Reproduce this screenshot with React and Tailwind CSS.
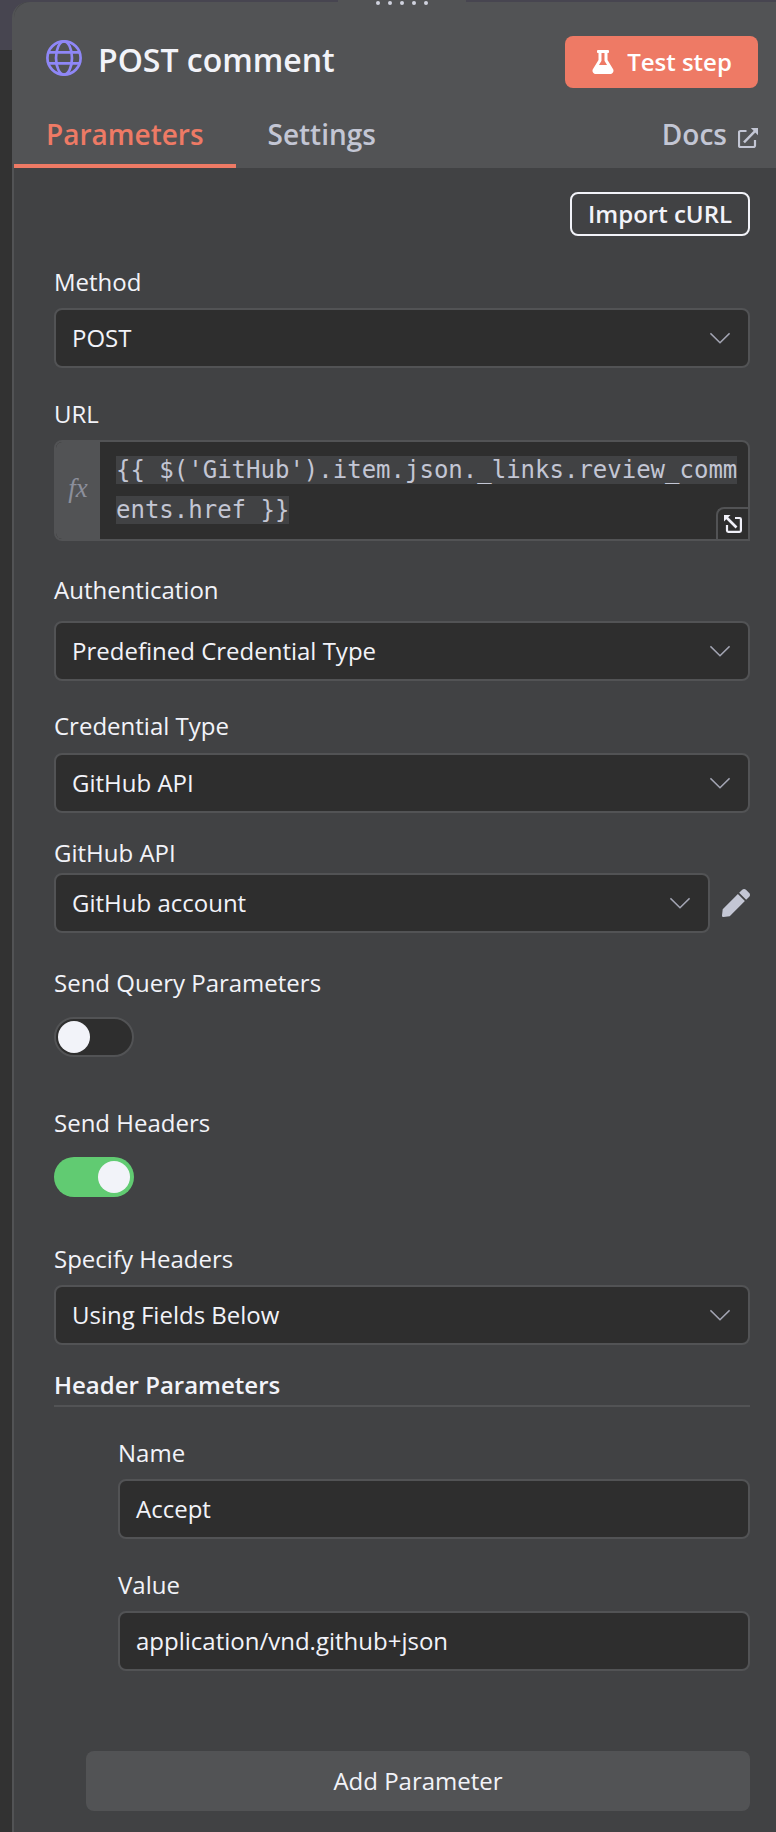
import React from "react";
import { FaFlask, FaPen } from "react-icons/fa";

function GlobeIcon() {
  return (
    <svg className="block size-9 shrink-0" viewBox="0 0 36 36" fill="none" stroke="#8f87f7" strokeWidth="2.7">
      <circle cx="18" cy="18" r="16.6" />
      <ellipse cx="18" cy="18" rx="8" ry="16.6" />
      <path d="M2.4 12.3h31.2M2.4 23.3h31.2" />
    </svg>
  );
}

function ExternalLinkIcon() {
  return (
    <svg className="block size-5 shrink-0" viewBox="0 0 20 20" fill="none" stroke="currentColor" strokeWidth="2">
      <path d="M8.5 3H2.4Q1 3 1 4.4v13.2Q1 19 2.4 19h13.2q1.4 0 1.4-1.4V12" strokeWidth="2.2" />
      <path d="M6 14.4 17 3.2" strokeWidth="2.4" />
      <path d="M12.8 0H20v7.2z" fill="currentColor" stroke="none" />
    </svg>
  );
}

function ExpandIcon() {
  return (
    <svg className="block size-[18px]" viewBox="0 0 18 18" fill="none" stroke="#f0f0f8" strokeWidth="2.2">
      <path d="M11 3h4.6q1.3 0 1.3 1.2v11.4q0 1.3-1.3 1.3H4.3Q3 16.9 3 15.6V10" />
      <path d="M2.5 2.5 12.5 12.5" strokeWidth="2.6" />
      <path d="M0 0h6.5L0 6.5z" fill="#f0f0f8" stroke="none" />
    </svg>
  );
}

function Chevron() {
  return (
    <svg className="block h-3 w-5 shrink-0" viewBox="0 0 20 12" fill="none" stroke="#a3a5b3" strokeWidth="1.6">
      <path d="M.4 1.3 10 10.7 19.6 1.3" />
    </svg>
  );
}

function Label({ children }) {
  return <div className="h-8 text-[24px] leading-8 whitespace-nowrap">{children}</div>;
}

function Box({ children }) {
  return (
    <div className="flex h-[60px] w-full items-center justify-between rounded-lg border-2 border-[#525355] bg-[#2e2e2e] pr-[18px] pl-4">
      {children}
    </div>
  );
}

function Select({ value }) {
  return (
    <Box>
      <span>{value}</span>
      <Chevron />
    </Box>
  );
}

function Toggle({ on }) {
  return on ? (
    <div className="flex h-10 w-20 items-center justify-end rounded-full bg-[#61cb72] px-1">
      <div className="size-8 rounded-full bg-[#f2f3f9]" />
    </div>
  ) : (
    <div className="flex h-10 w-20 items-center rounded-full border-2 border-[#525355] bg-[#2e2e2e] px-0.5">
      <div className="size-8 rounded-full bg-[#f2f3f9]" />
    </div>
  );
}

function Header() {
  return (
    <header className="h-[166px] rounded-tl-[16px] bg-[#525355]">
      <div className="flex h-[113px] items-start justify-between pr-[18px] pl-8">
        <div className="flex items-start gap-4 pt-[38px]">
          <GlobeIcon />
          <h1 className="text-[32px] leading-[40px] font-semibold whitespace-nowrap text-[#f2f3f9]">
            POST comment
          </h1>
        </div>
        <button className="mt-[34px] flex h-[52px] w-[193px] items-center justify-center gap-3 rounded-lg bg-[#ee7a65] font-semibold text-white">
          <FaFlask className="size-6" />
          <span>Test step</span>
        </button>
      </div>
      <nav className="flex h-[53px] justify-between pr-[18px] text-[28px] leading-[38px] font-semibold text-[#c3c6d4]">
        <div className="flex">
          <span className="h-[53px] w-[222px] border-b-4 border-[#ee7a65] pl-8 text-[#ee7a65]">Parameters</span>
          <span className="pl-[31.5px]">Settings</span>
        </div>
        <div className="flex gap-[11px]">
          <span>Docs</span>
          <span className="pt-[13px]"><ExternalLinkIcon /></span>
        </div>
      </nav>
    </header>
  );
}

export default function App() {
  return (
    <div className="relative h-[1832px] w-[776px] overflow-hidden bg-[linear-gradient(#474550_50px,#323232_50px)] pt-0.5 pl-3 font-['Open_Sans',sans-serif] text-[24px] leading-8 text-[#f2f3f9]">
      <div className="absolute top-0 left-[338px] z-10 flex h-2 w-32 items-start justify-center gap-2 bg-[#525355] pt-px">
        <i className="size-1 rounded-full bg-[#d0d2de]" />
        <i className="size-1 rounded-full bg-[#d0d2de]" />
        <i className="size-1 rounded-full bg-[#d0d2de]" />
        <i className="size-1 rounded-full bg-[#d0d2de]" />
        <i className="size-1 rounded-full bg-[#d0d2de]" />
      </div>
      <div className="h-[1830px] rounded-tl-[16px] border-l-2 border-[#525355] bg-[#414244]">
        <Header />
        <main className="flex flex-col pr-[26px] pl-10">
          <button className="mt-6 h-11 w-[180px] self-end rounded-lg border-2 border-[#f2f3f9] font-semibold whitespace-nowrap">
            <span className="block -mt-px">Import cURL</span>
          </button>

          <div className="mt-[30px]"><Label>Method</Label></div>
          <div className="mt-2.5"><Select value="POST" /></div>

          <div className="mt-[30px]"><Label>URL</Label></div>
          <div className="relative mt-2.5 flex h-[101px] overflow-hidden rounded-lg rounded-br-none border-2 border-[#525355] bg-[#2e2e2e]">
            <div className="flex w-11 shrink-0 items-center justify-center bg-[#525355] pb-1.5 font-['Liberation_Serif',serif] text-[27px] text-[#8c8f9b] italic">
              fx
            </div>
            <div className="pt-2 pl-4 font-['DejaVu_Sans_Mono',monospace] leading-10 whitespace-nowrap text-[#c3c6d4]">
              <span className="bg-[#414244]">{"{{ $('GitHub').item.json._links.review_comm"}</span>
              <br />
              <span className="bg-[#414244]">{"ents.href }}"}</span>
            </div>
            <div className="absolute right-0 bottom-0 flex h-8 w-8 items-center justify-center rounded-tl-lg border-t-2 border-l-2 border-[#525355] bg-[#2e2e2e]">
              <ExpandIcon />
            </div>
          </div>

          <div className="mt-[33px]"><Label>Authentication</Label></div>
          <div className="mt-[15px]"><Select value="Predefined Credential Type" /></div>

          <div className="mt-[29px]"><Label>Credential Type</Label></div>
          <div className="mt-[11px]"><Select value="GitHub API" /></div>

          <div className="mt-6"><Label>GitHub API</Label></div>
          <div className="mt-1 flex items-center gap-3">
            <Select value="GitHub account" />
            <FaPen className="size-7 shrink-0 text-[#c3c6d4]" />
          </div>

          <div className="mt-[34px]"><Label>Send Query Parameters</Label></div>
          <div className="mt-[18px]"><Toggle /></div>

          <div className="mt-[50px]"><Label>Send Headers</Label></div>
          <div className="mt-[18px]"><Toggle on /></div>

          <div className="mt-[46px]"><Label>Specify Headers</Label></div>
          <div className="mt-2.5"><Select value="Using Fields Below" /></div>

          <div className="mt-6 h-[38px] border-b-2 border-[#525355] font-semibold">Header Parameters</div>

          <div className="pl-16">
            <div className="mt-[30px]"><Label>Name</Label></div>
            <div className="mt-2.5"><Box><span>Accept</span></Box></div>
            <div className="mt-[30px]"><Label>Value</Label></div>
            <div className="mt-2.5"><Box><span>application/vnd.github+json</span></Box></div>
          </div>

          <button className="mt-20 ml-8 h-[60px] rounded-lg bg-[#525355]">Add Parameter</button>
        </main>
      </div>
    </div>
  );
}
